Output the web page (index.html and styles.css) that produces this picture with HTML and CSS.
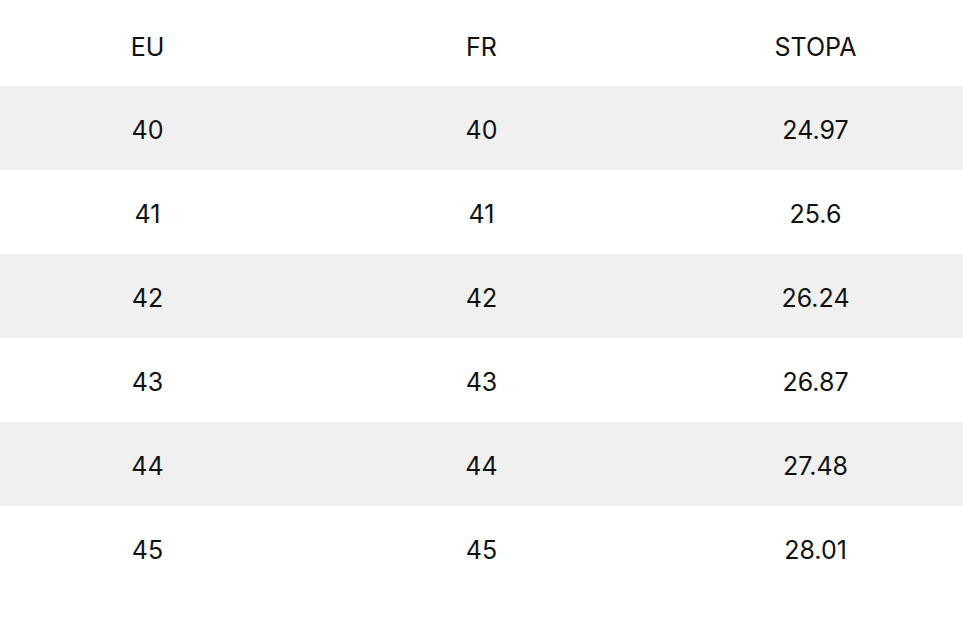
FILE: index.html
```html
<!DOCTYPE html>
<html>
<head>
<meta charset="utf-8">
<link rel="stylesheet" href="styles.css">
</head>
<body>
<div class="table">
  <div class="row head"><span>EU</span><span>FR</span><span>STOPA</span></div>
  <div class="row alt"><span>40</span><span>40</span><span>24.97</span></div>
  <div class="row"><span>41</span><span>41</span><span>25.6</span></div>
  <div class="row alt"><span>42</span><span>42</span><span>26.24</span></div>
  <div class="row"><span>43</span><span>43</span><span>26.87</span></div>
  <div class="row alt"><span>44</span><span>44</span><span>27.48</span></div>
  <div class="row"><span>45</span><span>45</span><span>28.01</span></div>
</div>
</body>
</html>
```
FILE: styles.css
```css
html, body {
  margin: 0;
  padding: 0;
  background: #fff;
  overflow: hidden;
}
.table {
  width: 963px;
  font-family: "Inter", "Liberation Sans", sans-serif;
  font-size: 25px;
  color: #111;
}
.row {
  display: grid;
  grid-template-columns: repeat(3, 334px);
  justify-content: center;
  align-items: center;
  height: 84px;
}
.row span {
  text-align: center;
  padding-top: 4px;
}
.row.head {
  height: 86px;
  padding-top: 4px;
  box-sizing: border-box;
}
.row.alt {
  background: #f0f0f0;
}
```
